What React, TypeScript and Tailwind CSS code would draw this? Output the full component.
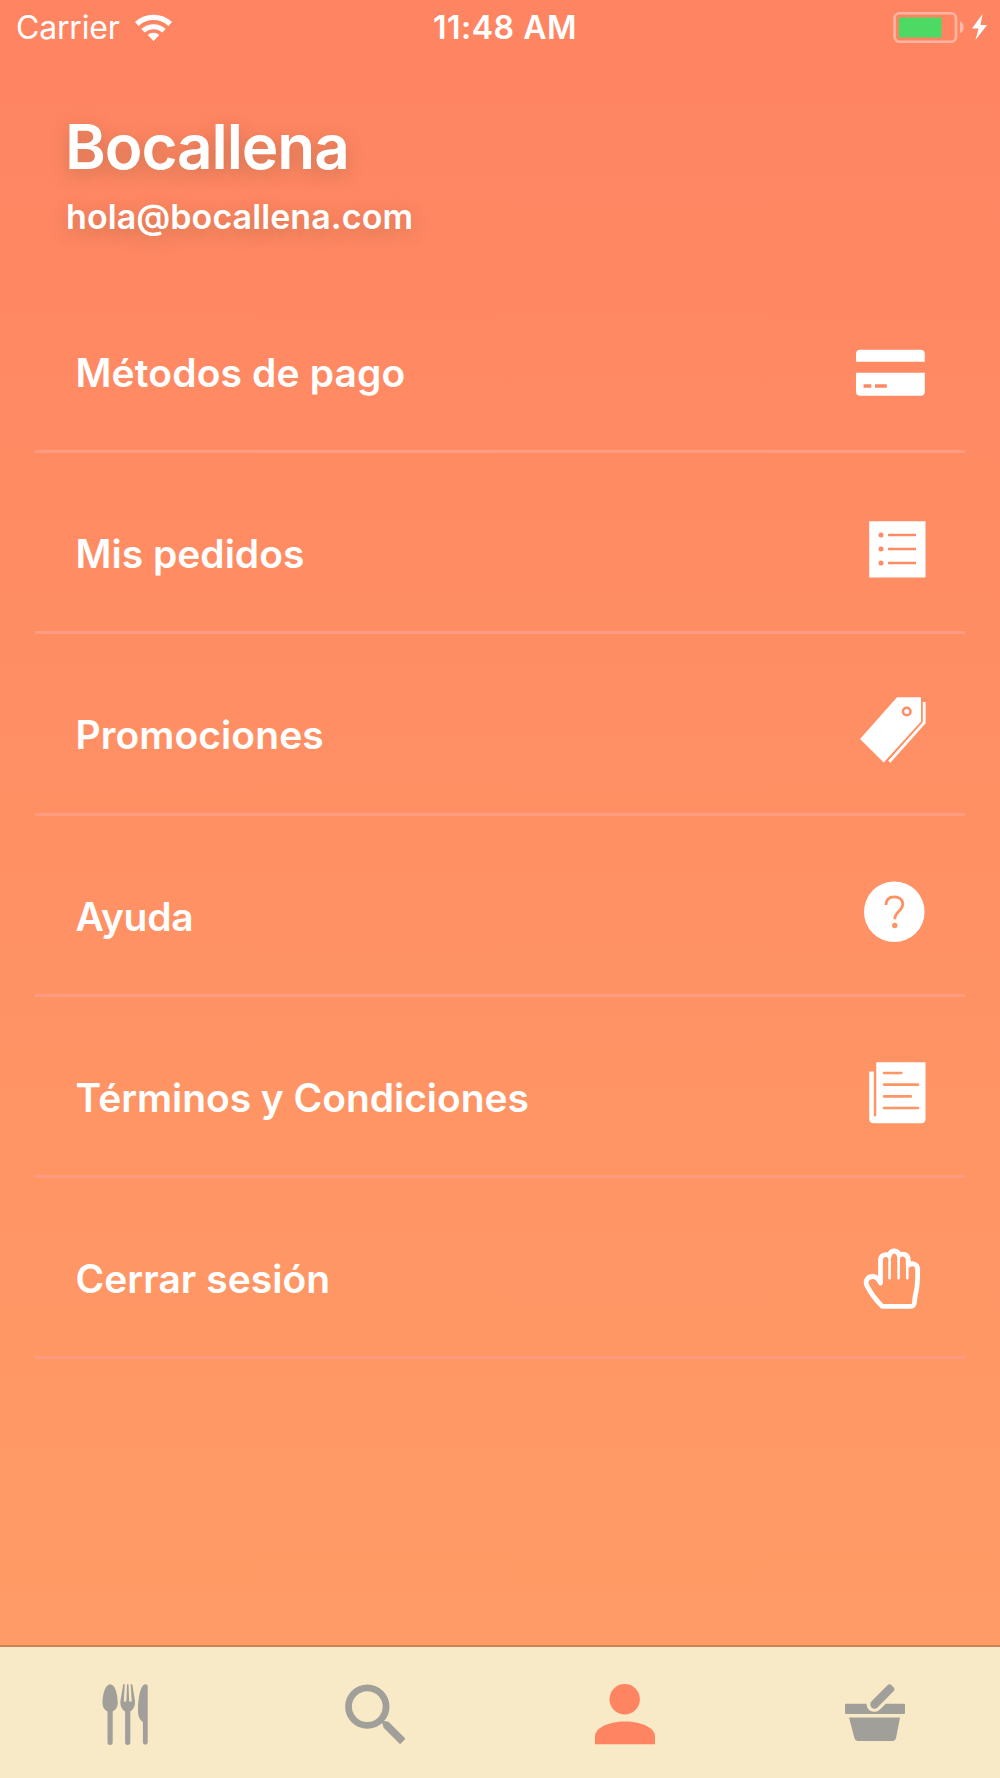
import type { ReactNode } from "react";

type MenuItem = { label: string; tracking: string; icon: ReactNode };

const CardIcon = () => (
  <svg viewBox="0 -13 100 100" className="w-[100px] h-[100px]">
    <path d="M16 31.700v-7.700q0-4.300 4.300-4.300h60.200q4.300 0 4.300 4.300v7.700z" fill="#fff" />
    <path d="M16 42.700h68.800v18.800q0 4.300-4.300 4.300h-60.200q-4.300 0-4.300-4.300z" fill="#fff" />
    <path d="M23.500 56h7.800M35 56h11.800" stroke="#ff8863" strokeWidth="3.600" />
  </svg>
);

const ListIcon = () => (
  <svg viewBox="0 -2 100 100" className="w-[100px] h-[100px]">
    <path d="M29.200 21.200h56.300v56.300h-56.300z" fill="#fff" />
    <path d="M48 35h28M48 49h28M48 63h28" stroke="#ff8b64" strokeWidth="2.700" />
    <g fill="#ff8b64">
      <circle cx="41" cy="35" r="2.500" />
      <circle cx="41" cy="49" r="2.500" />
      <circle cx="41" cy="63" r="2.500" />
    </g>
  </svg>
);

const TagIcon = () => (
  <svg viewBox="0 -0.7 100 100" className="w-[100px] h-[100px]">
    <path d="M57 17.500h24v24.300L43.700 82.700 20 59.300z" fill="#fff" />
    <path d="M84.200 22.300v20.800L49.300 82" fill="none" stroke="#fff" strokeWidth="2.800" />
    <circle cx="66.700" cy="31.800" r="3.800" fill="none" stroke="#ff8e65" strokeWidth="2.600" />
  </svg>
);

const HelpIcon = () => (
  <svg viewBox="0 0.7 100 100" className="w-[100px] h-[100px]">
    <circle cx="54.300" cy="51.500" r="30.300" fill="#fff" />
    <path
      d="M46 44.800c0-5.500 3.300-8.300 8.300-8.300 5.200 0 8.400 3 8.400 7.400 0 7.300-7.900 6.800-7.900 15"
      fill="none"
      stroke="#ff9165"
      strokeWidth="2.800"
    />
    <circle cx="54.800" cy="65.200" r="2.700" fill="#ff9165" />
  </svg>
);

const TermsIcon = () => (
  <svg viewBox="0 2 100 100" className="w-[100px] h-[100px]">
    <path d="M36.300 22.300h49.200v56.400q0 4.500-4.500 4.500H33.700q-4.500 0-4.500-4.500V31.500h4.600v44.700h2.500z" fill="#fff" />
    <path
      d="M44 33h17.300M44 44.600h34M44 56.400h26.800M44 68h34"
      stroke="#ff9465"
      strokeWidth="2.600"
      strokeLinecap="round"
    />
  </svg>
);

const HandIcon = () => (
  <svg viewBox="0 -6.700 100 100" className="w-[100px] h-[100px]">
    <path
      d="M42.200 76.700C37.500 72 31 64 27.200 56.500 24.100 50 28.500 46.800 33 46.800c3.500 0 5.800 3 7.500 6.500V30.500c0-6 6.500-6.500 8.700-4.200 1-6.300 8.500-6.800 10-.6 3-2.400 9-1 9 4v6c4-3.200 9.500-1.500 9.500 4 0 8.500-.2 15-1.200 20.500-.8 4.500-1.500 5.500-1.800 10.500-.2 4.500-1 6-4.200 6z"
      fill="none"
      stroke="#fff"
      strokeWidth="4.800"
      strokeLinejoin="round"
    />
    <path d="M49.600 26v22.500M58.600 26v22.500M67.300 29v19.500" stroke="#fff" strokeWidth="2.600" strokeLinecap="round" />
  </svg>
);

const items: MenuItem[] = [
  { label: "Métodos de pago", tracking: "tracking-[0.13px]", icon: <CardIcon /> },
  { label: "Mis pedidos", tracking: "tracking-[0px]", icon: <ListIcon /> },
  { label: "Promociones", tracking: "tracking-[0.08px]", icon: <TagIcon /> },
  { label: "Ayuda", tracking: "tracking-[-0.3px]", icon: <HelpIcon /> },
  { label: "Términos y Condiciones", tracking: "tracking-[-0.05px]", icon: <TermsIcon /> },
  { label: "Cerrar sesión", tracking: "tracking-[0.03px]", icon: <HandIcon /> },
];

function StatusBar() {
  return (
    <div className="h-[54px] flex items-center text-white text-[32px] leading-[54px]">
      <div className="w-[433px] flex items-center pl-[16px]">
        <span className="w-[119px] pt-[2px] tracking-[-0.2px]">Carrier</span>
        <svg viewBox="0 0 37 27" className="w-[37px] h-[27px]" fill="none" stroke="#fff">
          <path d="M1.800 9.900a24.500 24.500 0 0 1 33.400 0" strokeWidth="5.400" />
          <path d="M8 16.800a15.300 15.300 0 0 1 21 0" strokeWidth="5" />
          <path d="M18.500 27l-5.800-5.900a8.500 8.500 0 0 1 11.600 0z" fill="#fff" stroke="none" />
        </svg>
      </div>
      <span className="w-[460px] pt-[2px] font-semibold tracking-[0.5px]">11:48 AM</span>
      <svg viewBox="0 0 107 54" className="w-[107px] h-[54px]">
        <rect x="1.600" y="13.300" width="61.400" height="28.500" rx="5" fill="none" stroke="#fff" strokeOpacity=".4" strokeWidth="2.600" />
        <rect x="5.800" y="17.500" width="42.700" height="20" fill="#4cd964" />
        <path d="M67 21.500c5 1.500 5 10 0 11.500z" fill="#fff" fillOpacity=".45" />
        <path d="M89.500 14L79 28.500h6.500L82.500 40 94 25h-6.500z" fill="#fff" />
      </svg>
    </div>
  );
}

function TabBar() {
  return (
    <nav className="h-[133px] shrink-0 grid grid-cols-4 justify-items-center pt-[37px] bg-[#f8eac6] border-t-2 border-[#c98357]">
      <svg viewBox="0 -0.300 60 61" className="w-[60px] h-[61px]" fill="#a09f99">
        <path d="M15.200 0c4.500 0 7.500 9 7.500 18.500 0 4.500-2 7-5 8.800V58a2.600 2.600 0 0 1-5.200 0V27.300c-3-1.800-5-4.300-5-8.800C7.500 9 10.700 0 15.200 0z" />
        <path d="M28.200 0h1.600l-1 17.200h2.500L32 0h1.500l.7 17.200h2.500L35.700 0h1.600L40 17c.3 5-1.800 8.300-4.700 10.200V58a2.600 2.600 0 0 1-5.200 0V27.200c-2.900-1.900-5-5.200-4.700-10.200z" />
        <path d="M52.700 2v56a2.400 2.400 0 0 1-4.800 0V38c-3.500-3-4.900-6-4.900-12C43 14 45.500 0 50.500 0q2.200 0 2.200 2z" />
      </svg>
      <svg viewBox="0 -0.300 60 61" className="w-[60px] h-[61px]">
        <circle cx="22.300" cy="22.300" r="18.800" fill="none" stroke="#a09f99" strokeWidth="6.800" />
        <path d="M36 38l3-1.200 4.500.7 17 17-5.400 5.500-16.500-16.500-1.100-4z" fill="#a09f99" />
      </svg>
      <svg viewBox="0 0 60 61" className="w-[60px] h-[61px]" fill="#ff8462">
        <circle cx="29.700" cy="15.200" r="15.200" />
        <path d="M0 60.300v-8C0 45 12 37.600 30 37.600s30 7.400 30 14.700v8z" />
      </svg>
      <svg viewBox="0 -0.300 60 61" className="w-[60px] h-[61px]" fill="#a09f99">
        <path d="M1.200 19.500h20.300c.2 5 3.500 8.200 8 8 3.300-.2 4.800-1.500 6.700-3.500l4.500-4.500h18.100q1.200 0 1.200 1.200v7.800q0 1.200-1.200 1.200H1.200q-1.200 0-1.200-1.200v-7.800q0-1.200 1.200-1.200z" />
        <path d="M4 33.200h51l-4 20.800q-.6 2.700-3 2.700H12.500q-2.400 0-3-2.700z" />
        <path d="M26.300 17.300L42.500 1q2.200-1.900 4 0l2 2q1.900 2 0 4L32.500 23.200c-4 3.500-9.500-1.500-6.200-5.900z" />
      </svg>
    </nav>
  );
}

export default function App() {
  return (
    <div className="w-[1000px] h-[1778px] flex flex-col overflow-hidden bg-linear-to-b from-[#ff8462] to-[#ff9d66] font-['Inter',sans-serif]">
      <StatusBar />
      <header className="h-[218px] pt-[54px] pl-[65px] text-white">
        <h1 className="text-[62px] leading-[78px] font-semibold tracking-[-1.1px] [text-shadow:0_5px_18px_rgba(90,80,50,0.3)]">
          Bocallena
        </h1>
        <p className="mt-[10px] pl-px text-[34px] leading-[42px] font-semibold tracking-[0.08px] [text-shadow:0_5px_18px_rgba(90,80,50,0.3)]">
          hola@bocallena.com
        </p>
      </header>
      <main className="flex-1 px-[35px]">
        {items.map(item => (
          <div key={item.label} className="h-[181.2px] flex justify-between border-b-[3px] border-[#ff9b80] pl-[40.5px]">
            <span className={`pt-[76px] text-[39px] leading-[50px] font-semibold text-white ${item.tracking}`}>
              {item.label}
            </span>
            <div className="pt-[45px] mr-[25px]">{item.icon}</div>
          </div>
        ))}
      </main>
      <TabBar />
    </div>
  );
}
